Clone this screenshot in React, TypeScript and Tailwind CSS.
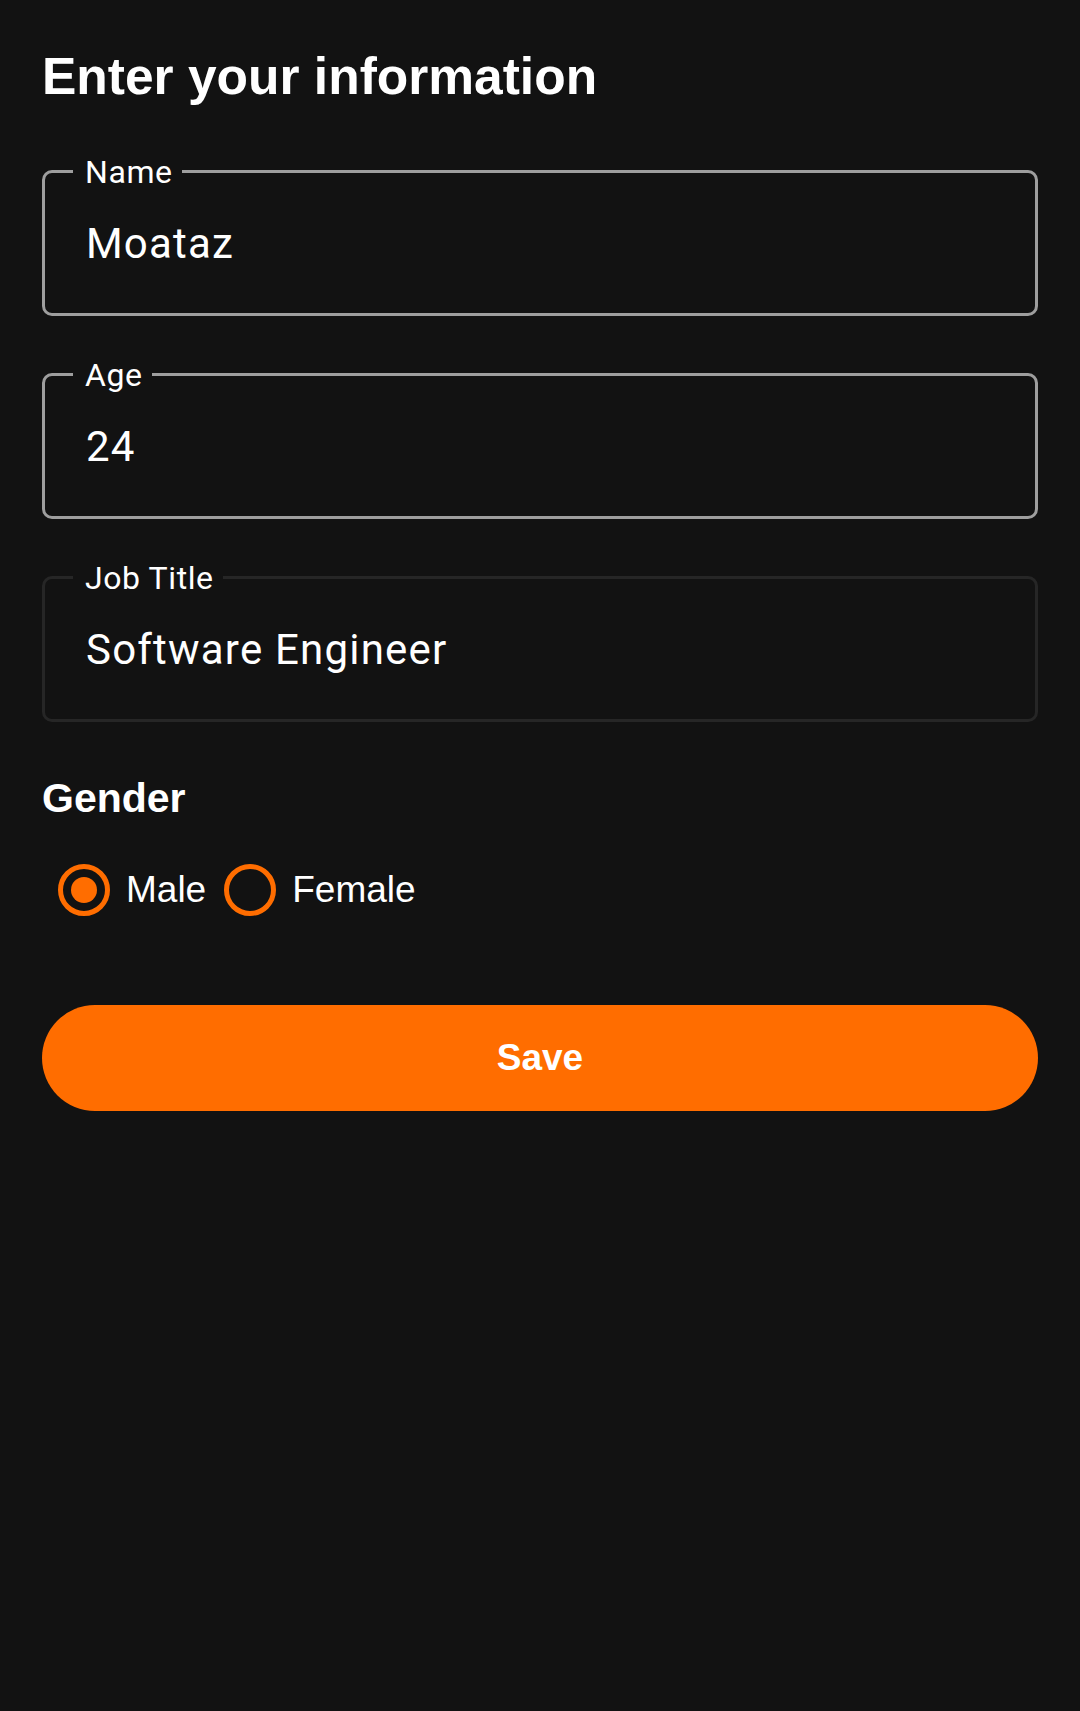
import { useState } from "react";

type FieldProps = {
  label: string;
  value: string;
  disabled?: boolean;
};

function OutlinedField({ label, value, disabled }: FieldProps) {
  return (
    <div
      className={
        "relative h-[146px] rounded-[10px] border-[3px] " +
        (disabled ? "border-[#262626]" : "border-[#9e9e9e]")
      }
    >
      {/* notched label sits on the top border */}
      <span className="absolute left-[28px] top-[-17px] bg-[#121212] pl-[12px] pr-[9px] font-['Roboto',sans-serif] text-[32px] leading-[32px] tracking-[0.6px] text-white">
        {label}
      </span>
      <input
        readOnly
        disabled={disabled}
        defaultValue={value}
        className="block w-full bg-transparent pl-[41px] pr-[40px] pt-[47px] pb-[45px] font-['Roboto',sans-serif] text-[42px] leading-[48px] tracking-[1.2px] text-white outline-none disabled:text-white"
      />
    </div>
  );
}

function Radio({ label, checked, onClick }: { label: string; checked: boolean; onClick: () => void }) {
  return (
    <button type="button" onClick={onClick} className="flex items-center gap-[16px]">
      <span className="flex h-[52px] w-[52px] items-center justify-center rounded-full border-[5px] border-[#ff6d00]">
        {checked && <span className="h-[26px] w-[26px] rounded-full bg-[#ff6d00]" />}
      </span>
      <span className="text-[37px] leading-[44px] text-white">{label}</span>
    </button>
  );
}

export default function App() {
  const [gender, setGender] = useState("male");

  return (
    <div className="min-h-[1711px] w-full bg-[#121212] px-[42px] pt-[46px] font-['Liberation_Sans',Arial,sans-serif]">
      <h1 className="text-[51.5px] font-bold leading-[60px] text-white">Enter your information</h1>

      <div className="mt-[64px] flex flex-col gap-[57px]">
        <OutlinedField label="Name" value="Moataz" />
        <OutlinedField label="Age" value="24" />
        <OutlinedField label="Job Title" value="Software Engineer" disabled />
      </div>

      <h2 className="mt-[52px] text-[41px] font-bold leading-[48px] text-white">Gender</h2>

      <div className="mt-[42px] flex items-center gap-[18px] pl-[16px]">
        <Radio label="Male" checked={gender === "male"} onClick={() => setGender("male")} />
        <Radio label="Female" checked={gender === "female"} onClick={() => setGender("female")} />
      </div>

      <button
        type="button"
        className="mt-[89px] flex h-[106px] w-full items-center justify-center rounded-full bg-[#ff6d00] text-[37px] font-bold text-white"
      >
        Save
      </button>
    </div>
  );
}
